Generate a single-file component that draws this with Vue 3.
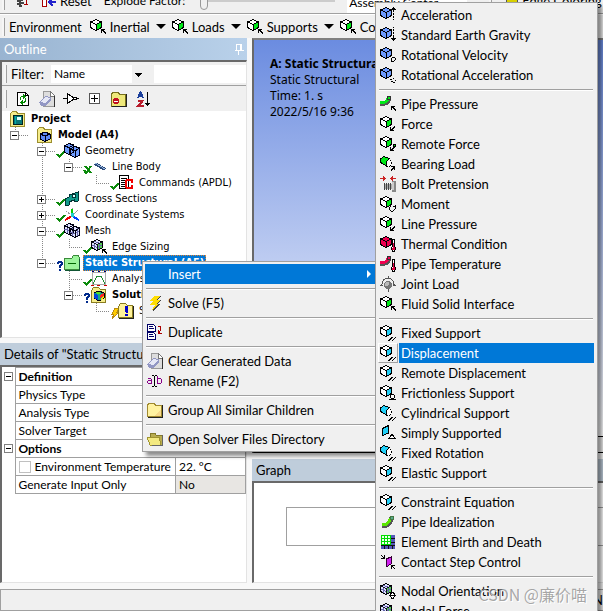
<script setup>
import { ref } from 'vue'

const filterKind = ref('Name')
const filterText = ref('')

const envButtons = ['Inertial', 'Loads', 'Supports', 'Conditions']

// guides: '|' passes through, 't' branches, 'l' ends here, ' ' stays empty
const tree = [
  { text: 'Project', guides: '', icon: 'book', bold: true },
  { text: 'Model (A4)', guides: 'l', box: '-', icon: 'model', bold: true },
  { text: 'Geometry', guides: ' t', box: '-', mark: 'check', icon: 'solids' },
  { text: 'Line Body', guides: ' |l', box: '-', mark: 'hidden', icon: 'line' },
  { text: 'Commands (APDL)', guides: ' | l', mark: 'check', icon: 'script' },
  { text: 'Cross Sections', guides: ' t', box: '+', mark: 'check', icon: 'section' },
  { text: 'Coordinate Systems', guides: ' t', box: '+', mark: 'check', icon: 'axes' },
  { text: 'Mesh', guides: ' t', box: '-', mark: 'check', icon: 'mesh' },
  { text: 'Edge Sizing', guides: ' |l', mark: 'check', icon: 'sizing' },
  { text: 'Static Structural (A5)', guides: ' l', box: '-', mark: 'query', icon: 'env', bold: true, selected: true },
  { text: 'Analysis Settings', guides: '  t', mark: 'check', icon: 'settings' },
  { text: 'Solution (A6)', guides: '  l', box: '-', mark: 'query', icon: 'solution', bold: true },
  { text: 'Solution Information', guides: '   l', mark: 'boltSmall', icon: 'info' },
]
const guideClass = { '|': 'through', t: 'tee', l: 'end', ' ': 'blank' }

const details = [
  { group: 'Definition', rows: [{ name: 'Physics Type' }, { name: 'Analysis Type' }, { name: 'Solver Target' }] },
  {
    group: 'Options',
    rows: [
      { name: 'Environment Temperature', value: '22. °C', check: true },
      { name: 'Generate Input Only', value: 'No', muted: true },
    ],
  },
]

const contextMenu = [
  [{ text: 'Insert', sub: true, active: true }],
  [{ text: 'Solve (F5)', layers: ['bolt'] }],
  [{ text: 'Duplicate', layers: ['duplicate'] }],
  [{ text: 'Clear Generated Data', layers: ['eraser'] }, { text: 'Rename (F2)', layers: ['rename'] }],
  [{ text: 'Group All Similar Children', layers: ['folder'] }],
  [{ text: 'Open Solver Files Directory', layers: ['folderOpen'] }],
]

const insertMenu = [
  [
    { text: 'Acceleration', tone: 'blue', layers: ['cube', 'up'] },
    { text: 'Standard Earth Gravity', tone: 'blue', layers: ['cube', 'down'] },
    { text: 'Rotational Velocity', tone: 'blue', layers: ['cube', 'spin'] },
    { text: 'Rotational Acceleration', tone: 'blue', layers: ['cube', 'spinDots'] },
  ],
  [
    { text: 'Pipe Pressure', tone: 'green', layers: ['pipe', 'arrowUL'] },
    { text: 'Force', tone: 'green', layers: ['wire', 'arrowDL'] },
    { text: 'Remote Force', tone: 'green', layers: ['wire', 'arrowDL', 'node'] },
    { text: 'Bearing Load', tone: 'green', layers: ['cylinder', 'arrowUR'] },
    { text: 'Bolt Pretension', layers: ['pretension'] },
    { text: 'Moment', tone: 'green', layers: ['wire', 'turn'] },
    { text: 'Line Pressure', tone: 'green', layers: ['wire', 'arrowDL'] },
    { text: 'Thermal Condition', tone: 'red', layers: ['cube', 'thermo'] },
    { text: 'Pipe Temperature', tone: 'red', layers: ['pipe', 'thermo'] },
    { text: 'Joint Load', layers: ['joint'] },
    { text: 'Fluid Solid Interface', tone: 'green', layers: ['wire', 'arrowUL'] },
  ],
  [
    { text: 'Fixed Support', tone: 'cyan', layers: ['wire', 'hatch'] },
    { text: 'Displacement', tone: 'cyan', layers: ['wire', 'hatch'], active: true },
    { text: 'Remote Displacement', tone: 'cyan', layers: ['wire', 'hatch'] },
    { text: 'Frictionless Support', tone: 'cyan', layers: ['wire', 'roller'] },
    { text: 'Cylindrical Support', tone: 'cyan', layers: ['cylinder', 'hatch'] },
    { text: 'Simply Supported', tone: 'cyan', layers: ['plate', 'wedge'] },
    { text: 'Fixed Rotation', tone: 'cyan', layers: ['cylinder', 'hatch'] },
    { text: 'Elastic Support', tone: 'cyan', layers: ['wire', 'hatch'] },
  ],
  [
    { text: 'Constraint Equation', tone: 'cyan', layers: ['wire', 'hatch'] },
    { text: 'Pipe Idealization', tone: 'green', layers: ['pipeFull'] },
    { text: 'Element Birth and Death', layers: ['elements'] },
    { text: 'Contact Step Control', layers: ['contact'] },
  ],
  [
    { text: 'Nodal Orientation', layers: ['mesh1', 'orient'] },
    { text: 'Nodal Force', layers: ['mesh1', 'arrowDL'] },
  ],
]
</script>

<template>
  <div class="app">
    <svg class="defs" aria-hidden="true">
      <symbol id="wire" viewBox="0 0 16 16">
        <path d="M.5 3L6 .5 11.500 3v5.500L6 11.500 .5 8.500z" fill="#fff" />
        <path d="M6 5.500L11.500 3v5.500L6 11.500z" fill="currentColor" />
        <path d="M.5 3L6 .5 11.500 3v5.500L6 11.500 .5 8.500zM.5 3L6 5.500V11.500M6 5.500L11.500 3" fill="none" stroke="#000" />
      </symbol>
      <symbol id="cube" viewBox="0 0 16 16">
        <path d="M.5 3L6 .5 11.500 3v5.500L6 11.500 .5 8.500z" fill="currentColor" stroke="#000" />
        <path d="M.5 3L6 5.500V11.500M6 5.500L11.500 3" fill="none" stroke="#000" />
      </symbol>
      <symbol id="cylinder" viewBox="0 0 16 16">
        <path d="M5 2.500L9.500 2.500 11.500 5.500V8.500L9.500 10.500H7z" fill="#fff" stroke="#000" stroke-dasharray="2 1" />
        <path d="M1 2.500L4 .5 9 2.500 7 5 6 9.500 .5 6.500z" fill="currentColor" stroke="#000" />
      </symbol>
      <symbol id="plate" viewBox="0 0 16 16">
        <path d="M2.500 3.500L8.500 .5V8L2.500 10.500z" fill="currentColor" stroke="#000" />
      </symbol>
      <symbol id="pipe" viewBox="0 0 16 16">
        <path d="M0 8C6 8 8 6 9 2" fill="none" stroke="#555" stroke-width="5" />
        <path d="M0 7C6 7 7 5 8.500 2" fill="none" stroke="currentColor" stroke-width="3" />
        <path d="M7.500 .5h3v3h-3z" fill="currentColor" stroke="#333" />
      </symbol>
      <symbol id="pipeFull" viewBox="0 0 16 16">
        <path d="M2 12C8 12 10 8 12 4" fill="none" stroke="#555" stroke-width="5" />
        <path d="M2 11C8 11 9 8 11 4" fill="none" stroke="#5be600" stroke-width="3" />
        <path d="M10.500 2.500h3v3h-3z" fill="#5a8" stroke="#474" />
      </symbol>
      <symbol id="arrowUL" viewBox="0 0 16 16"><path d="M11 10h4v1h-2l3 3-1 1-3-3v2h-1z" /></symbol>
      <symbol id="arrowDL" viewBox="0 0 16 16"><path d="M15 10v1l-3 3h2v1h-4v-4h1v2l3-3z" /></symbol>
      <symbol id="arrowUR" viewBox="0 0 16 16"><path d="M11 10h4v4h-1v-2l-3 3-1-1 3-3h-2z" /></symbol>
      <symbol id="node" viewBox="0 0 16 16"><path d="M13.500 8.500h2v2h-2z" fill="currentColor" stroke="#000" /></symbol>
      <symbol id="up" viewBox="0 0 16 16"><path d="M13 0h1v1h1v1h1v1h-2v2h-1V3h-2V2h1V1h1zM13 6h1v2h-1zM13 9h1v2h-1zM13 12h1v1h-1z" /></symbol>
      <symbol id="down" viewBox="0 0 16 16"><path d="M13 0h1v1h-1zM13 2h1v2h-1zM13 5h1v2h-1zM13 8h1v3h2v1h-1v1h-1v1h-1v-1h-1v-1h-1v-1h2z" /></symbol>
      <symbol id="spin" viewBox="0 0 16 16"><path d="M12 10.500h2l1.500 1v1l-2 2h-2M11.500 11v3.500" fill="none" stroke="#000" /></symbol>
      <symbol id="spinDots" viewBox="0 0 16 16"><path d="M10 12h2v1h-2zM11 14h2v1h-2zM13 11h1v1h-1zM15 13h1v1h-1zM13 15h2v1h-2z" /></symbol>
      <symbol id="turn" viewBox="0 0 16 16"><path d="M11 10.500L9 12v1l2 2h2l2-2v-2M12.500 10.500h3M15 8.500v3" fill="none" stroke="#000" /></symbol>
      <symbol id="hatch" viewBox="0 0 16 16"><path d="M8 15h1v-1h1v-1h1v-1h2v1h-1v1h-1v1h-1v1H8zM12 15h1v-1h1v-1h1v-1h1v1h-1v1h-1v1h-1v1h-1z" /></symbol>
      <symbol id="roller" viewBox="0 0 16 16"><path d="M10.500 10.500l1-1h2l1 1v2l-1 1h-2l-1-1zM9 14.500h7" fill="#fff" stroke="#000" /></symbol>
      <symbol id="wedge" viewBox="0 0 16 16"><path d="M12 9.500L15.500 13.500h-7z" fill="#fff" stroke="#000" /></symbol>
      <symbol id="orient" viewBox="0 0 16 16"><path d="M11.500 9.500h2l1 2v2l-1 1.500h-2l-1-1.500v-2zM9 12.500h7" fill="#fff" stroke="#000" /></symbol>
      <symbol id="thermo" viewBox="0 0 16 16">
        <path d="M12.500 3.500h2v7l1 1v2l-1 1.500h-2l-1-1.500v-2l1-1z" fill="#fff" stroke="#000" />
        <path d="M13 7h1v4l1 1v2h-3v-2l1-1z" fill="#e00040" />
      </symbol>
      <symbol id="joint" viewBox="0 0 16 16">
        <path d="M2 8.500C2 4 5 2.500 8 2.500s6 2 6 6M0 9.500h3M13 9.500h3M8 0v3M8 13v3" fill="none" stroke="#555" />
        <circle cx="8" cy="9" r="4" fill="#777" /><circle cx="7" cy="8" r="2" fill="#bbb" />
      </symbol>
      <symbol id="pretension" viewBox="0 0 16 16">
        <path d="M0 2h3V0l3 2.500L3 5V3H0zM16 2h-3V0l-3 2.500L13 5V3h3z" fill="#c22" />
        <path d="M4 8h8v5H4z" fill="#aaa" /><path d="M4 7h1v7H4zM6 7h1v7H6zM8 7h1v7H8zM10 7h1v7h-1z" fill="#444" />
        <path d="M12 5h4v11h-4z" fill="#888" /><path d="M12 6h2v8h-2z" fill="#ccc" />
      </symbol>
      <symbol id="elements" viewBox="0 0 16 16">
        <path d="M1 1h14v14H1z" fill="#111" /><path d="M2 2h8v8H2z" fill="#efffef" />
        <path d="M1.500 1.500h9v9h-9zM4.500 1v9M7.500 1v9M1 4.500h9M1 7.500h9" fill="none" stroke="#0d0" />
        <path d="M11 1h4v3h-4zM11 5h4v3h-4zM11 9h4v2h-4zM1 12h3v3H1zM5 12h3v3H5zM9 12h3v3H9zM13 12h2v3h-2z" fill="#5558b8" />
      </symbol>
      <symbol id="contact" viewBox="0 0 16 16">
        <path d="M6 5l5-2v7l-5 3z" fill="#d020f0" stroke="#303" />
        <path d="M1 1l3 3M4.500 1v3.500H1M15 15l-3-3M11.500 15v-3.500H15" fill="none" stroke="#000" />
      </symbol>
      <symbol id="mesh1" viewBox="0 0 16 16">
        <path d="M.5 3L6 .5 11.500 3v5.500L6 11.500 .5 8.500z" fill="#dfe2ff" stroke="#000" />
        <path d="M6 5.500L11 3.500v5L6 11z" fill="#5c5" />
        <path d="M1 6l5 2.500L11 6M3 2l5.500 2.500V10M3 4v6" fill="none" stroke="#66a" />
        <path d="M.5 3L6 5.500V11.500M6 5.500L11.500 3" fill="none" stroke="#112" />
      </symbol>

      <symbol id="bolt" viewBox="0 0 16 16">
        <path d="M8 1h6l-3 4h3l-3 4h2L6 16l2-6H4l3-4H4z" fill="#444" />
        <path d="M7 1h6l-3 4h3L9 9h3l-7 6 3-5H3l3-4H3z" fill="#fd0" />
      </symbol>
      <symbol id="duplicate" viewBox="0 0 16 16">
        <path d="M.5 .5h6l2 2v5h-8zM.5 8.500h6l2 2v5h-8z" fill="#fff" stroke="#006" />
        <path d="M2 2.500h4M2 4.500h5M2 10.500h4M2 12.500h5" stroke="#006" />
        <path d="M11 2.500h2.500v4L11.500 9M11 5.500v4h3.500" fill="none" stroke="#a00" />
      </symbol>
      <symbol id="eraser" viewBox="0 0 16 16">
        <path d="M4 .5h7l4 4V15.500H4z" fill="#ddd" stroke="#999" /><path d="M11 0l5 5h-5z" fill="#fff" stroke="#777" /><path d="M15.500 5v11" stroke="#333" />
        <path d="M0 11l6-6 6 1v3l-6 6H2z" fill="#9297c4" /><path d="M1 11l6-5 4 1-5 5z" fill="#e6e8f6" />
      </symbol>
      <symbol id="rename" viewBox="0 0 16 16">
        <path d="M.5 5.500h3l1 1v4h-3l-1-1v-1l1-1h3M10.500 3v7.500h3l1-1v-3l-1-1h-3" fill="none" stroke="#808" />
        <path d="M5 2.500h2M8 2.500h2M7.500 3v10M5 13.500h2M8 13.500h2" stroke="#000" />
      </symbol>
      <symbol id="folder" viewBox="0 0 16 16">
        <path d="M.5 3l2-2h4l2 2h6v11.500H.5z" fill="#fff2a0" stroke="#a08a30" /><path d="M15.500 3v12.500H1" fill="none" stroke="#222" /><path d="M7 14L14 7v7z" fill="#f7d98c" />
      </symbol>
      <symbol id="folderOpen" viewBox="0 0 16 16">
        <path d="M3 2h5l1 2h6v10H4z" fill="#b8ac50" stroke="#857a2a" /><path d="M0 6h12l2 8H3z" fill="#f3e980" stroke="#a09430" /><path d="M15.500 4v10.500H5" fill="none" stroke="#666" />
      </symbol>

      <symbol id="book" viewBox="0 0 16 16">
        <path d="M.5 2.500l2-2h4l1 2h7v13H.5z" fill="#f5ec8a" stroke="#9c8e30" /><path d="M3.500 4.500h9v9h-9z" fill="#087878" stroke="#022" />
        <path d="M7 6h4v3H7z" fill="#dff" /><path d="M5.500 5v8" stroke="#0aa" />
      </symbol>
      <symbol id="model" viewBox="0 0 16 16">
        <path d="M.5 2.500l2-2h4l1 2h7v13H.5z" fill="#f5ec8a" stroke="#9c8e30" />
        <path d="M3 7l5-2 5 2v5l-5 2.500L3 12z" fill="#5e8bf5" stroke="#001" /><path d="M3 7l5 2 5-2M8 9v5" fill="none" stroke="#001" />
      </symbol>
      <symbol id="solids" viewBox="0 0 16 16">
        <path d="M.5 3L5 .5 9.500 2v7L5 11.500 .5 9zM6 6l5-2.500L15.500 5v7L11 14.500 6 12z" fill="#6e9bff" stroke="#001" />
        <path d="M.5 3L5 4.500V11M5 4.500L9.500 2M6 6l5 2v6M11 8l4.500-3" fill="none" stroke="#001" />
      </symbol>
      <symbol id="line" viewBox="0 0 16 16"><path d="M4 4.500l10 6" stroke="#2b4a7a" stroke-width="3" /><path d="M4 4l10 6" stroke="#9bb8e0" /></symbol>
      <symbol id="script" viewBox="0 0 16 16">
        <path d="M1.500 .5h9v13h-9z" fill="#fff" stroke="#000" /><path d="M3 3.500h6M3 5.500h6M3 7.500h4M3 9.500h4M3 11.500h4" stroke="#000" />
        <path d="M14 8V5H9L8 6v6l1 1h5v-3" fill="none" stroke="#f00000" stroke-width="2" />
      </symbol>
      <symbol id="section" viewBox="0 0 16 16">
        <path d="M1 8l4-2V4l9-3v9l-4 1v-2l-5 2v3l-4 1z" fill="#129a8c" stroke="#033" /><circle cx="10" cy="5" r="2" fill="#dff" stroke="#033" />
      </symbol>
      <symbol id="axes" viewBox="0 0 16 16">
        <path d="M8 9V1M8 9l6-6M8 9L2 4" stroke="#999" stroke-dasharray="2 1" /><path d="M8 8V2" stroke="#0c0" stroke-width="2" />
        <path d="M8 9l7 4" stroke="#04f" stroke-width="2" /><path d="M8 9L1 13" stroke="#e00" stroke-width="2" /><path d="M7 6h3v4H7z" fill="#2cc" />
      </symbol>
      <symbol id="mesh" viewBox="0 0 16 16">
        <path d="M.5 3L5 .5 9.500 2v7L5 11.500 .5 9zM6 6l5-2.500L15.500 5v7L11 14.500 6 12z" fill="#dfe2ff" stroke="#001" />
        <path d="M3 2v8M.5 6l5 2M8.500 5v8M13 5v8M6 9l5 2 4-3" fill="none" stroke="#66a" />
        <path d="M.5 3L5 4.500V11M5 4.500L9.500 2M6 6l5 2v6M11 8l4.500-3" fill="none" stroke="#001" />
      </symbol>
      <symbol id="env" viewBox="0 0 16 16">
        <path d="M.5 3.500h7l2-3h5l1 3v11H.5z" fill="#9cf59c" stroke="#3a8a3a" /><path d="M4 8.500h8" stroke="#060" /><path d="M15.500 4v11.500H1" fill="none" stroke="#153" />
      </symbol>
      <symbol id="sizing" viewBox="0 0 16 16"><use href="#mesh1" width="16" height="16" /><use href="#arrowUL" width="16" height="16" /></symbol>
      <symbol id="settings" viewBox="0 0 16 16">
        <path d="M1.500 1.500h13v12h-13z" fill="#fff" stroke="#aaa" /><path d="M2 13L6 5h4l4 8" fill="none" stroke="#283" />
        <path d="M1 0h2v1H1zM7 0h2v1H7zM13 0h2v1h-2z" fill="#006" /><path d="M0 14h3v1H0zM6 14h3v1H6zM13 14h3v1h-3z" fill="#c00" />
      </symbol>
      <symbol id="solution" viewBox="0 0 16 16">
        <path d="M.5 3.500l2-3h5l2 2h5v13H.5z" fill="#f5ec8a" stroke="#8a7c20" /><path d="M3 6l5-2 5 2v5l-5 3-5-3z" fill="#1a8" stroke="#001" />
        <path d="M3 6l4 2v5l-4-2z" fill="#04d" /><path d="M9 8l4-2v3l-4 2z" fill="#f22" /><path d="M5 5h4v2H6z" fill="#5d2" /><path d="M10 11l3-2v2l-3 2z" fill="#fd0" />
      </symbol>
      <symbol id="info" viewBox="0 0 16 16">
        <path d="M.5 3.500l2-3h5l2 2h5v12H.5z" fill="#fff29a" stroke="#8a7c20" /><path d="M15.500 3v12.500H1" fill="none" stroke="#222" /><path d="M7 3h3v6l-1 1H8L7 9zM7 11h3v2H7z" fill="#00c" />
      </symbol>

      <symbol id="check" viewBox="0 0 10 16"><path d="M1 11l2.500 3L9 8" fill="none" stroke="#0b8a0b" stroke-width="2" /></symbol>
      <symbol id="hidden" viewBox="0 0 10 16"><path d="M1 11l2 3 5-7M2 7l6 7" fill="none" stroke="#0b8a0b" stroke-width="2" /></symbol>
      <symbol id="query" viewBox="0 0 10 16"><path d="M1 7h1V6h4v1h1v3H6v1H5v2H3v-3h1V9h1V8H3v1H1zM3 14h2v2H3z" fill="#002a8c" /></symbol>
      <symbol id="boltSmall" viewBox="0 0 10 16"><path d="M5 5h4L7 9h2l-7 7 2-5H2z" fill="#fc0" stroke="#b98a10" /></symbol>

      <symbol id="refresh" viewBox="0 0 16 16">
        <path d="M2.500 1.500h8l3 3v10h-11z" fill="#fff" stroke="#000" /><path d="M10.500 1v3.500h3.500" fill="none" stroke="#000" />
        <path d="M5.500 9V6.500L7 5h2M10.500 7v3L9 11.500H7" fill="none" stroke="#080" /><path d="M8 3l3 2-3 3zM8 9l-3 2.500 3 2.500z" fill="#080" />
      </symbol>
      <symbol id="gate" viewBox="0 0 16 16"><path d="M0 7.500h4M4.500 2.500v10l7-5zM13 7.500h3" fill="#fff" stroke="#000" /><circle cx="12" cy="7.500" r="1.500" fill="#fff" stroke="#000" /></symbol>
      <symbol id="plus" viewBox="0 0 16 16"><path d="M2.500 2.500h10v10h-10z" fill="#fff" stroke="#555" /><path d="M4 7.500h7M7.500 4v7" stroke="#000" /></symbol>
      <symbol id="folderHide" viewBox="0 0 16 16">
        <path d="M.5 3l2-2h4l2 2h6v12H.5z" fill="#eee87a" stroke="#77701c" /><path d="M15.500 3v12.500H1" fill="none" stroke="#222" /><circle cx="5" cy="10" r="3" fill="#c01020" /><path d="M3 10.500h4" stroke="#fff" />
      </symbol>
      <symbol id="sortAZ" viewBox="0 0 16 16">
        <path d="M3 7L5.500 1 8 7M4 5h3.500" fill="none" stroke="#1b3f9c" stroke-width="2" /><path d="M3 9.500h5L3 15h5.500" fill="none" stroke="#b81c2c" stroke-width="2" />
        <path d="M12 1h1v11h2l-2 3h-1l-2-3h2z" />
      </symbol>
      <symbol id="pin" viewBox="0 0 16 16"><path d="M5.500 3.500h5v6h-5zM9.500 3v6M3.500 9.500h9M7.500 10v4" fill="none" stroke="#fff" /></symbol>
      <symbol id="spring" viewBox="0 0 16 16">
        <path d="M3 2l6 2-6 1 6 2-6 1 6 2-5 1 4 2M5 13h3" fill="none" stroke="#444" stroke-width="1.500" /><path d="M12 1v10M10 11.500h4" stroke="#a00" />
      </symbol>
      <symbol id="reset" viewBox="0 0 16 16"><path d="M2.500 0h4v13h-4z" fill="#fff" stroke="#a00" /><path d="M16 9H10M13 5L9 9l4 4" fill="none" stroke="#22c" stroke-width="2" /></symbol>
    </svg>

    <div class="bar bar-top">
      <div class="bar-row">
        <span class="grip"></span>
        <button class="tool spring" aria-label="Explode view"><svg class="ico"><use href="#spring" /></svg></button>
        <button class="tool"><svg class="ico"><use href="#reset" /></svg>Reset</button>
        <label class="explode" for="explode">Explode Factor:</label>
        <input id="explode" class="slider" type="range" value="0" />
        <select class="assembly" aria-label="Explode origin"><option>Assembly Center</option></select>
        <span class="grip"></span>
        <button class="tool edge"><span class="swatch"></span>Edge Coloring</button>
      </div>
    </div>

    <div class="bar bar-env">
      <span class="grip"></span>
      <span class="env-label">Environment</span>
      <button v-for="b in envButtons" :key="b" class="tool">
        <svg class="ico green"><use href="#wire" /><use href="#arrowUL" /></svg>{{ b }}<span class="caret"></span>
      </button>
    </div>

    <main class="work">
      <div class="column">
        <section class="panel outline">
          <h2 class="title active">Outline<svg class="ico"><use href="#pin" /></svg></h2>
          <div class="frame">
            <div class="filter">
              <span class="grip"></span>
              <label for="kind">Filter:</label>
              <select id="kind" v-model="filterKind"><option>Name</option><option>Tag</option><option>Type</option></select>
              <input v-model="filterText" type="text" aria-label="Filter text" />
            </div>
            <div class="tree-tools">
              <span class="grip"></span>
              <button v-for="i in ['refresh', 'eraser', 'gate', 'plus', 'folderHide', 'sortAZ']" :key="i" :aria-label="i">
                <svg class="ico"><use :href="'#' + i" /></svg>
              </button>
            </div>
            <ul class="tree">
              <li v-for="n in tree" :key="n.text">
                <span v-for="(g, i) in n.guides" :key="i" class="guide" :class="guideClass[g]">
                  <button v-if="n.box && i === n.guides.length - 1" class="box" :class="{ closed: n.box === '+' }" :aria-label="'Toggle ' + n.text"></button>
                </span>
                <span class="mark"><svg v-if="n.mark"><use :href="'#' + n.mark" /></svg></span>
                <svg class="ico"><use :href="'#' + n.icon" /></svg>
                <span class="name" :class="{ bold: n.bold, selected: n.selected }">{{ n.text }}</span>
              </li>
            </ul>
          </div>
        </section>

        <section class="panel details">
          <h2 class="title">Details of "Static Structural (A5)"</h2>
          <div class="frame">
            <table>
              <colgroup><col class="col-gutter" /><col /><col class="col-value" /></colgroup>
              <tbody v-for="g in details" :key="g.group">
                <tr>
                  <td class="gutter"><button class="box" :aria-label="'Toggle ' + g.group"></button></td>
                  <th colspan="2">{{ g.group }}</th>
                </tr>
                <tr v-for="r in g.rows" :key="r.name">
                  <td class="gutter"></td>
                  <td class="key">
                    <label v-if="r.check"><input type="checkbox" />{{ r.name }}</label>
                    <template v-else>{{ r.name }}</template>
                  </td>
                  <td :class="{ muted: r.muted }">{{ r.value }}</td>
                </tr>
              </tbody>
            </table>
          </div>
        </section>
      </div>

      <div class="column right">
        <section class="view">
          <div class="scene">
            <strong>A: Static Structural</strong>
            <span>Static Structural</span>
            <span>Time: 1. s</span>
            <span>2022/5/16 9:36</span>
          </div>
          <div class="tabs"></div>
        </section>
        <section class="panel graph">
          <h2 class="title">Graph</h2>
          <div class="frame"><div class="plot"></div></div>
        </section>
      </div>
    </main>

    <footer class="status"><span>N</span></footer>

    <nav class="menu context" aria-label="Context menu">
      <ul v-for="(group, gi) in contextMenu" :key="gi">
        <li v-for="m in group" :key="m.text">
          <button :class="{ active: m.active, wide: m.sub }">
            <span class="slot"><svg v-if="m.layers" class="ico"><use v-for="l in m.layers" :key="l" :href="'#' + l" /></svg></span>
            <span class="label">{{ m.text }}</span>
            <span v-if="m.sub" class="more"></span>
          </button>
        </li>
      </ul>
    </nav>

    <nav class="menu insert" aria-label="Insert">
      <ul v-for="(group, gi) in insertMenu" :key="gi">
        <li v-for="m in group" :key="m.text">
          <button :class="{ active: m.active }">
            <span class="slot"><svg class="ico" :class="m.tone"><use v-for="l in m.layers" :key="l" :href="'#' + l" /></svg></span>
            <span class="label">{{ m.text }}</span>
          </button>
        </li>
      </ul>
    </nav>

    <span class="watermark">CSDN @廉价喵</span>
  </div>
</template>

<style>
body { margin: 0; overflow: hidden; }
</style>

<style scoped>
* { box-sizing: border-box; }
.app {
  position: relative;
  display: flex;
  flex-direction: column;
  height: 100vh;
  overflow: hidden;
  background: #f8f8f8;
  color: #000;
  font: 13px/20px Lato, "Noto Sans CJK SC", sans-serif;
}
.defs { position: absolute; width: 0; height: 0; }
.ico { flex: none; width: 16px; height: 16px; shape-rendering: crispEdges; }
.green { color: #00e818; }
.blue { color: #6e9bff; }
.cyan { color: #20d0f8; }
.red { color: #f00050; }
button { padding: 0; border: 0; background: none; color: inherit; font: inherit; text-align: left; white-space: nowrap; }
ul { margin: 0; padding: 0; list-style: none; }

.bar { flex: none; display: flex; background: #f0f0f0; white-space: nowrap; overflow: hidden; }
.bar-top { height: 14px; align-items: flex-end; border-bottom: 1px solid #a0a0a0; }
.bar-row { display: flex; align-items: center; height: 24px; width: 100%; }
.bar-env { height: 24px; align-items: center; gap: 6px; border-top: 1px solid #fff; }
.grip { flex: none; width: 3px; height: 18px; margin-left: 2px; background: #f6f6f6; border-right: 1px solid #a0a0a0; }
.tool { display: flex; align-items: center; gap: 4px; }
.spring { margin: 0 10px 0 9px; }
.explode { margin-left: 12px; font-size: 12px; }
.slider { appearance: none; width: 135px; height: 20px; margin: 0 12px 0 15px; background: linear-gradient(#ccc, #ccc) center / 100% 2px no-repeat; }
.slider::-webkit-slider-thumb { appearance: none; width: 8px; height: 18px; background: #f0f0f0; border: 1px solid #999; border-radius: 0 0 4px 4px; }
.assembly { appearance: none; width: 120px; height: 24px; padding: 4px 2px 0; border: 0; background: #fff; font: inherit; font-size: 12px; margin-right: 20px; }
.edge { margin-left: 14px; }
.swatch { width: 12px; height: 12px; background: #d8d000; border: 1px solid #555; }
.env-label { margin: 0 2px 0 -2px; }
.caret { border: 5px solid transparent; border-top-color: #000; border-bottom: 0; margin-left: 2px; }

.work { flex: 1; min-height: 0; display: grid; grid-template-columns: 247px 1fr; gap: 5px; padding-bottom: 6px; }
.column { min-width: 0; min-height: 0; display: flex; flex-direction: column; gap: 5px; }
.right { gap: 6px; }
.panel { min-height: 0; display: flex; flex-direction: column; }
.outline { flex: 5 1 0; }
.details { flex: 4 1 0; }
.graph { flex: 0 0 124px; }
.title {
  flex: none; display: flex; align-items: center; justify-content: space-between;
  height: 22px; margin: 0; padding: 0 0 0 4px; overflow: hidden;
  background: #bfcddb; font-size: 13px; font-weight: 400; white-space: nowrap;
}
.title.active { background: linear-gradient(90deg, #99b4d1, #b9d1ea); color: #fff; }
.frame { flex: 1; min-height: 0; overflow: hidden; background: #fff; border: 1px solid #e3e3e3; border-top: 2px solid #696969; border-left: 2px solid #696969; }

.filter, .tree-tools { display: flex; align-items: center; height: 24px; background: #f0f0f0; }
.filter { border-bottom: 1px solid #a0a0a0; }
.filter label { margin: 0 7px 0 4px; }
.filter select {
  appearance: none; width: 96px; height: 18px; padding: 0 3px; border: 0; border-radius: 0; color: #000; font: inherit; font-size: 12px; line-height: 18px;
  background:
    linear-gradient(#000, #000) 84px 8px / 7px 1px no-repeat,
    linear-gradient(#000, #000) 85px 9px / 5px 1px no-repeat,
    linear-gradient(#000, #000) 86px 10px / 3px 1px no-repeat,
    linear-gradient(#000, #000) 87px 11px / 1px 1px no-repeat,
    linear-gradient(90deg, #fff 81px, #f0f0f0 81px);
}
.filter input { flex: 1; min-width: 0; height: 18px; margin-left: 7px; padding: 0 2px; border: 0; font: inherit; }
.tree-tools { gap: 8px; height: 25px; }
.tree-tools button { display: flex; }

.tree { font: 11px/16px "DejaVu Sans Condensed", "Noto Sans", sans-serif; }
.tree li { display: flex; height: 16px; white-space: nowrap; }
.guide { position: relative; flex: none; width: 27px; height: 16px; display: flex; align-items: center; padding-left: 8px; }
.through { background: repeating-linear-gradient(#888 0 1px, transparent 1px 2px) 13px 0 / 1px 100% no-repeat; }
.tee { background: repeating-linear-gradient(#888 0 1px, transparent 1px 2px) 13px 0 / 1px 100% no-repeat, repeating-linear-gradient(90deg, #888 0 1px, transparent 1px 2px) 13px 8px / 14px 1px no-repeat; }
.end { background: repeating-linear-gradient(#888 0 1px, transparent 1px 2px) 13px 0 / 1px 8px no-repeat, repeating-linear-gradient(90deg, #888 0 1px, transparent 1px 2px) 13px 8px / 14px 1px no-repeat; }
.box { width: 9px; height: 9px; border: 1px solid #808080; background: linear-gradient(#000, #000) 1px 3px / 5px 1px no-repeat, #fff; }
.box.closed { background: linear-gradient(#000, #000) 1px 3px / 5px 1px no-repeat, linear-gradient(#000, #000) 3px 1px / 1px 5px no-repeat, #fff; }
.mark { flex: none; width: 8px; height: 16px; }
.mark svg { display: block; width: 10px; height: 16px; shape-rendering: crispEdges; }
.name { margin-left: 3px; padding: 0 2px; }
.bold { font-weight: 700; }
.selected { background: #0078d7; color: #fff; outline: 1px dotted #e08030; outline-offset: -1px; }

table { width: 100%; border-collapse: collapse; table-layout: fixed; font-size: 12px; line-height: 17px; }
.col-gutter { width: 13px; }
.col-value { width: 70px; }
td, th { height: 18px; padding: 0 0 0 3px; border: 1px solid #a0a0a0; text-align: left; white-space: nowrap; overflow: hidden; }
.gutter { padding: 0 0 0 2px; border: 0; }
.gutter .box { display: block; }
.muted { background: #e8e6e3; }
.key label { display: flex; align-items: center; gap: 4px; }
.key input { appearance: none; flex: none; width: 12px; height: 12px; margin: 0; border: 1px solid #c0c0c0; background: #fff; }

.view { flex: 1; min-height: 0; display: flex; flex-direction: column; border: 1px solid #000; border-right: 0; border-top: 2px solid #808080; border-left: 2px solid #696969; }
.scene { flex: 1; display: flex; flex-direction: column; padding: 16px; font: 12px/16px "Noto Sans", sans-serif; white-space: nowrap; background: linear-gradient(#6b8ce0, #fff); }
.tabs { height: 16px; background: #f0f0f0; border-top: 1px solid #000; }
.graph .frame { padding: 24px 0 36px 32px; border-right: 0; }
.plot { height: 100%; border: 1px solid #a0a0a0; border-right: 0; }
.status { flex: none; display: flex; align-items: center; justify-content: flex-end; height: 22px; background: #f0f0f0; border: 1px solid #a0a0a0; border-right: 0; }

.menu { position: absolute; padding: 2px; background: #f0f0f0; border: 1px solid #a0a0a0; box-shadow: 4px 4px 4px rgba(0, 0, 0, .45); }
.context { left: 142px; top: 261px; width: 240px; }
.insert { left: 375px; top: 2px; width: 223px; padding-right: 3px; }
.menu ul + ul::before { content: ""; display: block; height: 1px; margin: 4px 1px 3px 1px; border-top: 1px solid #a0a0a0; background: #fff; }
.menu button { display: flex; align-items: center; width: 100%; height: 20px; }
.slot { flex: none; display: flex; align-items: center; width: 20px; height: 20px; padding-left: 2px; margin-right: 1px; }
.label { flex: 1; padding-left: 2px; line-height: 20px; }
.active .label { background: #0078d7; color: #fff; }
.insert .active .slot { border: 1px solid; border-color: #fff #a0a0a0 #a0a0a0 #fff; padding-left: 1px; }
.wide { background: #0078d7; }
.more { border: 4px solid transparent; border-left-color: #fff; border-right: 0; margin-right: 8px; }

.watermark {
  position: absolute; right: 16px; bottom: 6px; font: 16px/22px "Noto Sans CJK SC", sans-serif;
  color: rgba(140, 140, 140, .75); text-shadow: 1px 1px 0 #fff;
}
</style>
